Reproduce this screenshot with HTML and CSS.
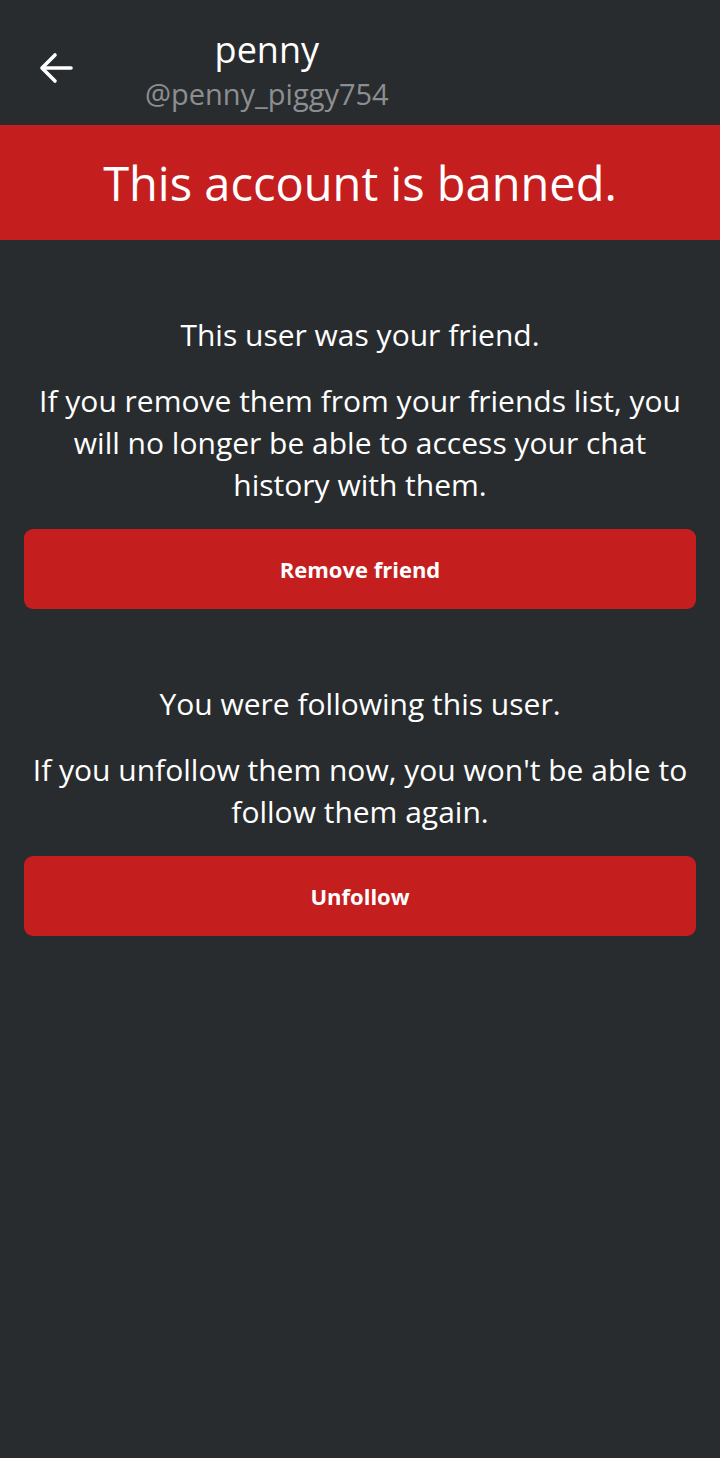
FILE: index.html
```html
<!DOCTYPE html>
<html>
<head>
<meta charset="utf-8">
<link rel="stylesheet" href="styles.css">
</head>
<body>
<div class="app">
  <header class="topbar">
    <button class="back" aria-label="Back">
      <svg width="36" height="36" viewBox="0 0 36 36"><path d="M33 18H4M17 5L4 18l13 13" fill="none" stroke="#fff" stroke-width="3.6" stroke-linecap="round" stroke-linejoin="round"/></svg>
    </button>
    <div class="title">
      <div class="name">penny</div>
      <div class="handle">@penny_piggy754</div>
    </div>
  </header>
  <div class="banner">This account is banned.</div>
  <main class="content">
    <section class="block">
      <p class="lead">This user was your friend.</p>
      <p class="desc">If you remove them from your friends list, you will no longer be able to access your chat history with them.</p>
      <button class="action">Remove friend</button>
    </section>
    <section class="block">
      <p class="lead">You were following this user.</p>
      <p class="desc">If you unfollow them now, you won't be able to follow them again.</p>
      <button class="action">Unfollow</button>
    </section>
  </main>
</div>
</body>
</html>
```
FILE: styles.css
```css
html, body {
  margin: 0;
  padding: 0;
  background: #292c2e;
}
body {
  font-family: "Open Sans", "Noto Sans", sans-serif;
  color: #fff;
  width: 720px;
  height: 1458px;
}
.topbar {
  height: 125px;
  display: flex;
  align-items: flex-start;
  padding-left: 38px;
  box-sizing: border-box;
}
.back {
  background: none;
  border: 0;
  padding: 0;
  width: 36px;
  height: 36px;
  margin-top: 50px;
  display: flex;
}
.title {
  margin-left: 71px;
  margin-top: 25px;
  display: flex;
  flex-direction: column;
  align-items: center;
}
.name {
  font-size: 36px;
  line-height: 49px;
}
.handle {
  font-size: 29px;
  line-height: 40px;
  color: #8c8f91;
}
.banner {
  background: #c41e1f;
  height: 115px;
  display: flex;
  align-items: center;
  justify-content: center;
  font-size: 47px;
}
.content {
  padding: 51px 24px 0;
}
.block {
  display: flex;
  flex-direction: column;
  align-items: center;
  padding-top: 23px;
}
.block + .block {
  padding-top: 74px;
}
.lead, .desc {
  margin: 0;
  font-size: 30px;
  line-height: 42px;
  text-align: center;
}
.desc {
  margin-top: 24px;
}
.action {
  margin-top: 23px;
  width: 100%;
  height: 80px;
  border: 0;
  border-radius: 9px;
  background: #c41e1f;
  color: #fff;
  font-family: inherit;
  font-size: 22px;
  font-weight: 700;
}
```
